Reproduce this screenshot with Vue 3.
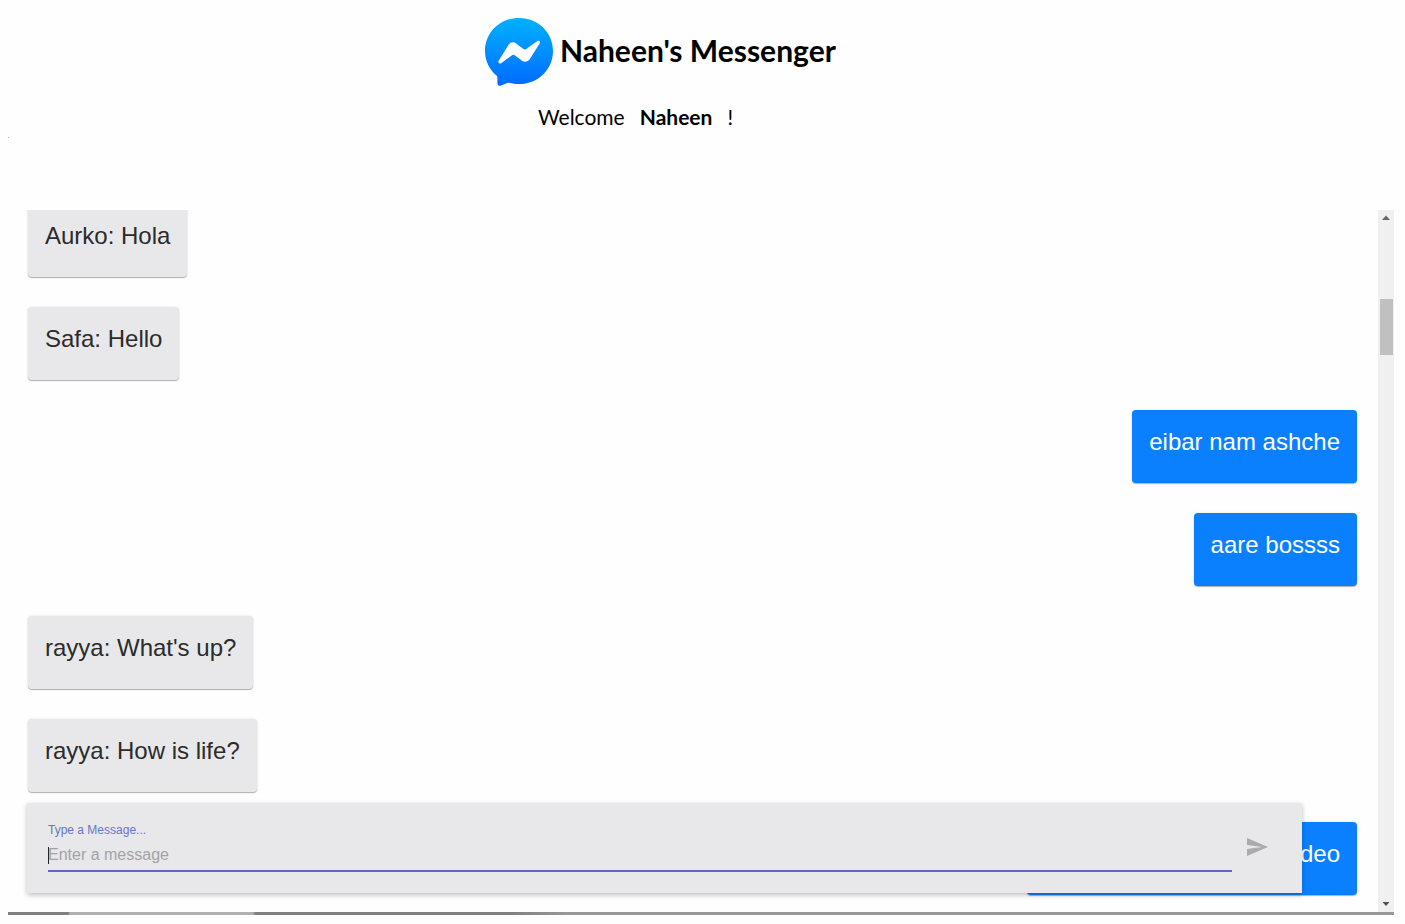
<script setup>
import { ref, onMounted } from 'vue'

const user = 'Naheen'
const draft = ref('')
const field = ref(null)
const messages = [
  { from: 'Aurko', text: 'Hola' },
  { from: 'Safa', text: 'Hello' },
  { from: user, text: 'eibar nam ashche' },
  { from: user, text: 'aare bossss' },
  { from: 'rayya', text: "What's up?" },
  { from: 'rayya', text: 'How is life?' },
  { from: user, text: 'We are making a new video' },
]

onMounted(() => field.value.focus())
</script>

<template>
  <div class="page">
    <header class="header">
      <div class="brand">
        <svg class="logo" viewBox="0 0 68 68" aria-hidden="true">
          <defs>
            <linearGradient id="bubble" x1="0" y1="0" x2="0" y2="1">
              <stop offset="0" stop-color="#00b2ff" />
              <stop offset="1" stop-color="#006aff" />
            </linearGradient>
          </defs>
          <path
            fill="url(#bubble)"
            d="M34 0C14.800 0 0 14.600 0 33c0 10 4.400 18.500 11.500 24.500.6.500.9 1.200.9 2v5.500c0 2.200 1.700 3.400 3.700 2.600l6.200-2.700c.6-.3 1.200-.3 1.800-.1 3.100.8 6.400 1.300 9.900 1.300 19.200 0 34-14.700 34-33.100S53.200 0 34 0z"
          />
          <path
            fill="#fff"
            d="M13.800 42.500 23.600 26.800c1.700-2.700 5.200-3.200 7.600-1.300l7.300 5.500c.9.700 1.800.7 2.700 0l10.900-7.800c1.900-1.400 3.800.4 2.500 2.400L44.700 41.300c-1.700 2.700-5.200 3.300-7.700 1.400l-7.300-5.400c-.9-.7-1.800-.7-2.700 0l-10.600 7.600c-1.900 1.400-3.900-.4-2.600-2.400z"
          />
        </svg>
        <h1 class="title">{{ user }}'s Messenger</h1>
      </div>
      <p class="welcome">
        <span>Welcome</span><strong>{{ user }}</strong><span>!</span>
      </p>
      <hr class="dot" />
    </header>

    <main class="chat">
      <div class="viewport">
        <ul class="messages">
          <li
            v-for="(m, i) in messages"
            :key="i"
            class="bubble"
            :class="{ own: m.from === user }"
          >
            {{ m.from === user ? m.text : `${m.from}: ${m.text}` }}
          </li>
        </ul>
      </div>
      <div class="scrollbar" aria-hidden="true">
        <svg class="arrow" viewBox="0 0 16 16"><path d="M8 5.500 12 10H4z" fill="#666" /></svg>
        <div class="thumb"></div>
        <svg class="arrow end" viewBox="0 0 16 16"><path d="M4.500 6h7L8 10z" fill="#505050" /></svg>
      </div>
      <form class="composer" @submit.prevent>
        <div class="field">
          <label for="message">Type a Message...</label>
          <div class="entry">
            <input
              id="message"
              ref="field"
              v-model="draft"
              type="text"
              placeholder="Enter a message"
              autocomplete="off"
              :class="{ empty: !draft }"
            />
            <span v-if="!draft" class="caret"></span>
          </div>
        </div>
        <button class="send" type="submit" aria-label="Send" :disabled="!draft">
          <svg viewBox="0 0 24 24"><path fill="#ababad" d="M2 21 23 12 2 3v7l15 2-15 2z" /></svg>
        </button>
      </form>
    </main>
    <div class="edge"></div>
  </div>
</template>

<style>
body {
  margin: 0;
  background: #fefefe;
}
</style>

<style scoped>
.page {
  box-sizing: border-box;
  display: flex;
  flex-direction: column;
  height: 100vh;
  padding: 0 11px 9px 8px;
  font-family: "Liberation Sans", Arial, sans-serif;
}
.header {
  flex: none;
  padding: 18px 0 72px;
  color: #000;
  font-family: Lato, sans-serif;
}
.brand {
  display: flex;
  align-items: center;
  gap: 7px;
  padding-left: calc(50% - 216px);
}
.logo {
  width: 68px;
  height: 68px;
}
.title {
  margin: 0;
  padding-bottom: 4px;
  font-size: 30px;
  line-height: 36px;
  font-weight: 700;
}
.welcome {
  display: flex;
  gap: 15px;
  margin: 19px 0 8px;
  padding-left: calc(50% - 163px);
  font-size: 21px;
  line-height: 24px;
}
.dot {
  width: 1px;
  height: 1px;
  margin: 0;
  border: 0;
  background: #aaa;
}
.chat {
  position: relative;
  flex: 1;
  min-height: 0;
  display: flex;
}
.viewport {
  flex: 1;
  overflow: hidden;
}
.messages {
  display: flex;
  flex-direction: column;
  align-items: flex-start;
  gap: 30px;
  margin: -6px 21px 0 20px;
  padding: 0;
  list-style: none;
}
.bubble {
  box-sizing: border-box;
  height: 73px;
  padding: 16px 17px;
  border-radius: 4px;
  background: #e8e8ea;
  box-shadow: 0 1px 1px rgba(0, 0, 0, 0.28), 0 0 3px rgba(0, 0, 0, 0.1);
  color: #2b2b2b;
  font-size: 24px;
  line-height: 32px;
}
.own {
  align-self: flex-end;
  background: #0b80ff;
  color: #fff;
}
.scrollbar {
  flex: none;
  display: flex;
  flex-direction: column;
  width: 16px;
  background: #f0f0f0;
}
.arrow {
  flex: none;
  width: 16px;
  height: 16px;
}
.thumb {
  height: 56px;
  margin: 73px 1px 0 2px;
  background: #c0c0c0;
}
.end {
  margin-top: auto;
}
.composer {
  position: absolute;
  left: 19px;
  right: 92px;
  bottom: 19px;
  box-sizing: border-box;
  display: flex;
  align-items: center;
  padding: 19px 33px 21px 21px;
  background: #e8e8ea;
  box-shadow: 0 2px 5px rgba(0, 0, 0, 0.25);
}
.field {
  flex: 1;
  display: flex;
  flex-direction: column;
  border-bottom: 2px solid #5c69c0;
}
.field label {
  color: #6874c8;
  font-size: 12px;
  line-height: 16px;
}
.entry {
  position: relative;
  display: flex;
}
.entry input {
  flex: 1;
  box-sizing: border-box;
  height: 32px;
  padding: 2px 0 0;
  border: 0;
  outline: 0;
  background: transparent;
  color: #222;
  font-family: inherit;
  font-size: 16px;
}
.entry input.empty {
  caret-color: transparent;
}
.entry input::placeholder {
  color: #a3a3a5;
}
.caret {
  position: absolute;
  left: 0;
  top: 9px;
  width: 1px;
  height: 17px;
  background: #222;
}
.send {
  display: flex;
  margin-left: 13px;
  padding: 0;
  border: 0;
  background: transparent;
}
.send svg {
  width: 24px;
  height: 24px;
}
.edge {
  flex: none;
  height: 3px;
  background: linear-gradient(90deg, #808080 0 60px, #b0b0b0 62px 245px, #808080 247px 500px, #999 560px);
}
</style>
